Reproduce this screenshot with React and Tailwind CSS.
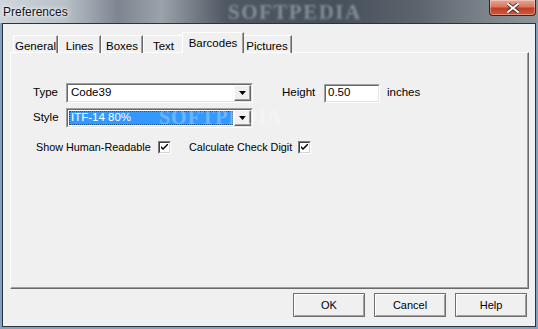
import React from 'react';

const font = { fontFamily: '"Liberation Sans", Arial, sans-serif' };

const DownArrow = () => (
  <svg width="7" height="4" viewBox="0 0 7 4">
    <path d="M0 0H7L3.5 4Z" fill="#000" />
  </svg>
);

const Combo = ({ value, selected }) => (
  <div className="flex h-[20px] w-[187px] border-t border-l border-[#a0a0a0] border-r border-b border-r-white border-b-white">
    <div className="flex flex-1 border-t border-l border-[#696969] border-r border-b border-r-[#e3e3e3] border-b-[#e3e3e3] bg-white">
      <div className="flex flex-1 items-center p-[1px]">
        {selected ? (
          <div className="flex h-full flex-1 items-center border border-dotted border-[#1a4f8c] bg-[#3399ff] pl-[1px] text-white">
            ITF-14 80%
          </div>
        ) : (
          <span className="pl-[2px]">{value}</span>
        )}
      </div>
      <div className="flex w-[17px] items-center justify-center border-t border-l border-white border-r border-b border-r-[#696969] border-b-[#696969] bg-[#f0f0f0] shadow-[inset_-1px_-1px_0_#a0a0a0]">
        <DownArrow />
      </div>
    </div>
  </div>
);

const Check = () => (
  <div className="flex h-[13px] w-[13px] shrink-0 items-center justify-center border-t border-l border-[#808080] border-r border-b border-r-white border-b-white">
    <div className="flex h-full w-full items-center justify-center border-t border-l border-[#404040] border-r border-b border-r-[#d4d4d4] border-b-[#d4d4d4] bg-white">
      <svg width="7" height="7" viewBox="0 0 7 7">
        <path d="M0 2v2l2 2 5-5V-1L2 4Z" fill="#000" />
      </svg>
    </div>
  </div>
);

const Tab = ({ label, selected, w }) =>
  selected ? (
    <div className={`relative z-10 -mx-[2px] flex h-[21px] ${w} items-start justify-center border-t border-l border-white border-r border-r-[#696969] bg-[#f0f0f0] pt-[2px] shadow-[inset_-1px_0_0_#a0a0a0]`}>
      {label}
    </div>
  ) : (
    <div className={`flex h-[18px] ${w} items-start justify-center border-t border-l border-white border-r border-r-[#696969] pt-[2px] shadow-[inset_-1px_0_0_#a0a0a0]`}>
      {label}
    </div>
  );

const Button = ({ children }) => (
  <button className="flex h-[24px] w-[72px] items-center justify-center border border-[#6f6f6f] bg-[#f0f0f0] shadow-[inset_1px_1px_0_#fff,inset_-1px_-1px_0_#a0a0a0] text-[11px] text-black">
    {children}
  </button>
);

export default function App() {
  return (
    <div className="flex h-[329px] w-[538px] flex-col overflow-hidden bg-[#7fa3c4] text-[11px] text-black" style={font}>
      {/* title bar */}
      <div className="relative flex h-[23px] shrink-0 justify-between overflow-hidden bg-[linear-gradient(90deg,#cfd6dc_0%,#b8c0c8_12%,#7d8690_22%,#9aa2aa_30%,#4f5862_42%,#46505a_62%,#5c646d_78%,#7a828a_90%,#8d959c_100%)]">
        <span className="absolute left-[228px] top-[2px] text-[21px] font-bold leading-none tracking-[1.5px] text-[#b4bdc6]/55 blur-[1px]" style={{ fontFamily: '"Liberation Serif", serif' }}>
          SOFTPEDIA
        </span>
        <span className="relative pl-[3px] pt-[3px] text-[12px] text-[#141414] [text-shadow:0_0_6px_#fff,0_0_3px_#fff]">
          Preferences
        </span>
        <div className="relative mr-[2px] flex h-[16px] w-[47px] items-center justify-center rounded-b-[4px] border border-t-0 border-[#4d1c14] bg-[linear-gradient(180deg,#e4a596_0%,#d9775f_45%,#c23d22_55%,#cc5a3c_100%)] shadow-[inset_0_0_0_1px_rgba(255,255,255,0.35)]">
          <svg width="12" height="10" viewBox="0 0 12 10">
            <path d="M1 1L11 9M11 1L1 9" stroke="#3a2020" strokeWidth="3.6" strokeLinecap="square" />
            <path d="M1 1L11 9M11 1L1 9" stroke="#fff" strokeWidth="2" strokeLinecap="square" />
          </svg>
        </div>
      </div>

      {/* client area */}
      <div className="mx-[2px] flex h-[304px] flex-col border border-[#2f3338] bg-[#f0f0f0]">
        <div className="ml-[7px] mt-[9px] w-[519px]">
          <div className="flex h-[20px] items-end pl-[3px] text-[11.5px]">
            <Tab label="General" w="w-[45px]" />
            <Tab label="Lines" w="w-[43px]" />
            <Tab label="Boxes" w="w-[42px]" />
            <Tab label="Text" w="w-[41px]" />
            <Tab label="Barcodes" w="w-[62px]" selected />
            <Tab label="Pictures" w="w-[50px]" />
          </div>
          <div className="-mt-px h-[237px] border-t border-l border-white border-r border-b border-r-[#696969] border-b-[#696969] shadow-[inset_-1px_-1px_0_#a0a0a0]">
            <div className="flex items-center pl-[22px] pt-[30px] text-[11.5px]">
              <span className="w-[33px]">Type</span>
              <Combo value="Code39" />
              <span className="ml-[29px] w-[42px]">Height</span>
              <div className="flex h-[19px] w-[56px] items-center border-t border-l border-[#a0a0a0] border-r border-b border-r-white border-b-white bg-white">
                <div className="flex h-full flex-1 items-center border-t border-l border-[#696969] border-r border-b border-r-[#e3e3e3] border-b-[#e3e3e3] pl-[2px]">
                  0.50
                </div>
              </div>
              <span className="ml-[7px]">inches</span>
            </div>
            <div className="relative mt-[5px] flex items-center pl-[22px] text-[11.5px]">
              <span className="w-[33px]">Style</span>
              <Combo selected />
              <span className="absolute left-[148px] top-[-1px] text-[20px] font-bold leading-none tracking-[1px] text-white/30" style={{ fontFamily: '"Liberation Serif", serif' }}>
                SOFTPEDIA
              </span>
            </div>
            <div className="mt-[11px] flex items-center whitespace-nowrap pl-[25px] text-[10.8px]">
              <span className="w-[122px]">Show Human-Readable</span>
              <Check />
              <span className="ml-[18px] w-[109px]">Calculate Check Digit</span>
              <Check />
            </div>
          </div>
        </div>
        <div className="mt-[4px] flex gap-[9px] pl-[290px]">
          <Button>OK</Button>
          <Button>Cancel</Button>
          <Button>Help</Button>
        </div>
      </div>
    </div>
  );
}
